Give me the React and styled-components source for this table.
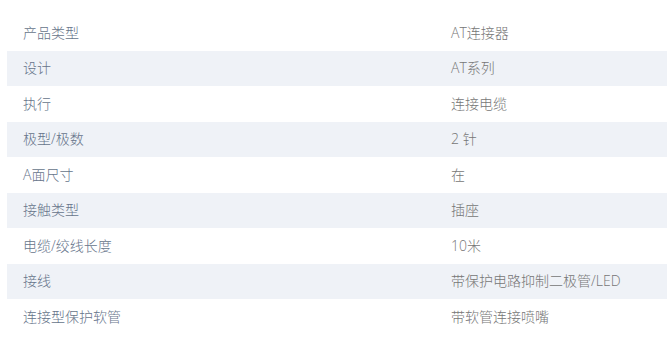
import React from "react";
import styled, { createGlobalStyle } from "styled-components";

const Global = createGlobalStyle`
  body {
    margin: 0;
    background: #fff;
    font-family: "Open Sans", "Noto Sans CJK SC", sans-serif;
  }
`;

const Wrap = styled.div`
  padding: 15px 0 0 7px;
`;

const Table = styled.div`
  display: grid;
  grid-template-columns: 428px 1fr;
`;

const Row = styled.div`
  display: contents;
  & > div {
    background: ${(p) => (p.$shaded ? "#eff2f7" : "#fff")};
  }
`;

const Cell = styled.div`
  height: 35.5px;
  box-sizing: border-box;
  display: flex;
  align-items: center;
  padding: 0 0 2px 16px;
  font-size: 14px;
  font-weight: 300;
  color: ${(p) => (p.$label ? "#66748a" : "#767676")};
  white-space: nowrap;
`;

const rows = [
  ["产品类型", "AT连接器"],
  ["设计", "AT系列"],
  ["执行", "连接电缆"],
  ["极型/极数", "2 针"],
  ["A面尺寸", "在"],
  ["接触类型", "插座"],
  ["电缆/绞线长度", "10米"],
  ["接线", "带保护电路抑制二极管/LED"],
  ["连接型保护软管", "带软管连接喷嘴"],
];

export default function App() {
  return (
    <Wrap>
      <Global />
      <Table>
        {rows.map(([k, v], i) => (
          <Row key={k} $shaded={i % 2 === 1}>
            <Cell $label>{k}</Cell>
            <Cell>{v}</Cell>
          </Row>
        ))}
      </Table>
    </Wrap>
  );
}
